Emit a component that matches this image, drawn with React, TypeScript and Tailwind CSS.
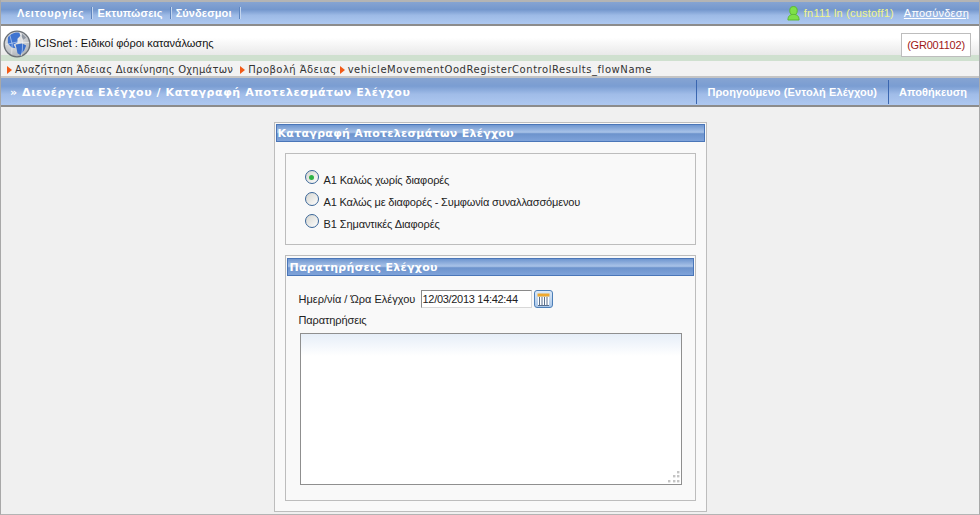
import React from "react";

const tahoma = "font-['Liberation_Sans','DejaVu_Sans',sans-serif]";

function Globe() {
  return (
    <svg width="28" height="28" viewBox="0 0 29 29" className="relative mt-[6px] shrink-0">
      <defs>
        <radialGradient id="g" cx="0.4" cy="0.3" r="0.8">
          <stop offset="0" stopColor="#f4f4f4" />
          <stop offset="1" stopColor="#a9adb3" />
        </radialGradient>
      </defs>
      <circle cx="14.5" cy="14.5" r="14" fill="#6a6f75" />
      <circle cx="14.5" cy="14.5" r="12.6" fill="url(#g)" />
      <path d="M5 8 C8 3 14 2 17 3 L18 6 L15 9 L15 13 L11 15 L13 19 L9 18 L5 14 Z" fill="#3f74d0" />
      <path d="M13 15 L20 14 L24 16 L22 21 L18 26 L15 24 L14 19 Z" fill="#3a6fcc" />
      <path d="M20 4 L24 8 L21 10 L19 7 Z" fill="#8f97a3" />
      <path d="M3 15 Q14 11 27 13 M7 5 Q11 14 9 25 M18 3 Q22 14 19 27" stroke="#fff" strokeWidth="0.7" fill="none" opacity="0.7" />
    </svg>
  );
}

function Arrow() {
  return (
    <svg width="5" height="8" viewBox="0 0 5 8" className="shrink-0">
      <path d="M0 0 L5 4 L0 8 Z" fill="#f25a16" />
    </svg>
  );
}

function Radio({ on }: { on?: boolean }) {
  return (
    <span className="flex h-[14px] w-[14px] shrink-0 items-center justify-center rounded-full border border-[#3a6698] bg-[linear-gradient(135deg,#d6d6d0,#fdfdfd)]">
      {on && <span className="h-[5px] w-[5px] rounded-full bg-[#2fb344]" />}
    </span>
  );
}

function TitleBar({ children, top }: { children: React.ReactNode; top: boolean }) {
  return (
    <div className={`mx-[1px] flex h-[18px] items-center border border-[#4a76b8] bg-[linear-gradient(#6f96cf,#a9c3e8_45%,#6d93cc_55%,#7fa3da)] pt-[2px] font-['DejaVu_Sans',sans-serif] text-[11px] font-bold tracking-[0.3px] text-white ${top ? "mt-[1px] pl-[1px]" : "mt-[2px] pl-[2px]"}`}>
      {children}
    </div>
  );
}

function CalendarIcon() {
  return (
    <span className="flex h-[18px] w-[19px] shrink-0 items-center justify-center rounded-[3px] border border-[#4d7fb8] bg-[linear-gradient(#dbe9f8,#a9c6e8)]">
      <svg width="13" height="13" viewBox="0 0 13 13">
        <rect x="0.5" y="0.5" width="12" height="3" fill="#f0a92e" />
        <rect x="1" y="4" width="11" height="8.5" fill="#fff" />
        <path d="M2.5 4 V12.5 M5 4 V12.5 M7.5 4 V12.5 M10 4 V12.5" stroke="#5a6f8c" strokeWidth="1" />
        <path d="M1 12.5 H12" stroke="#5a6f8c" />
      </svg>
    </span>
  );
}

function Sep() {
  return <span className="ml-[7px] mr-[5px] h-[12px] w-px bg-[#5f86c0] shadow-[1px_0_0_#c3d5ee]" />;
}

export default function App() {
  return (
    <div className={`flex h-[515px] w-[980px] flex-col overflow-hidden border-x border-b border-x-[#a8a8a8] border-b-[#b4b4b4] bg-[#f0f0f0] ${tahoma}`}>
      <div className="flex h-[26px] shrink-0 items-center border-t-2 border-b-2 border-t-[#b4b4b4] border-b-[#8c8c8c] bg-[linear-gradient(#86a4d2,#7497cd_35%,#9dbae6_60%,#adc8f0)] pl-[16px] pr-[10px] text-[11px]">
        <span className="font-bold tracking-[0.65px] text-white">Λειτουργίες</span>
        <Sep />
        <span className="font-bold tracking-[0.15px] text-white">Εκτυπώσεις</span>
        <Sep />
        <span className="font-bold tracking-[0.1px] text-white">Σύνδεσμοι</span>
        <Sep />
        <span className="flex-1" />
        <svg width="13" height="15" viewBox="0 0 14 16" className="mr-[4px]">
          <ellipse cx="7" cy="5" rx="4" ry="4.5" fill="#7ee04a" stroke="#5ab82c" />
          <path d="M1 15 C1 10 4 9 7 9 C10 9 13 10 13 15 Z" fill="#7ee04a" stroke="#5ab82c" />
        </svg>
        <span className="tracking-[0.2px] text-[#f1f58a]">fn111 ln (custoff1)</span>
        <span className="ml-[10px] tracking-[0.2px] text-white underline">Αποσύνδεση</span>
      </div>

      <div className="flex h-[29px] shrink-0 items-center bg-[linear-gradient(#ffffff,#ffffff_40%,#e9e9e9)] pl-[2px] pr-[8px]">
        <Globe />
        <span className="ml-[4px] mt-[6px] text-[11px] text-[#111]">ICISnet : Ειδικοί φόροι κατανάλωσης</span>
        <span className="flex-1" />
        <span className="relative mt-[9px] flex h-[24px] w-[70px] items-center justify-center border border-[#bdbdbd] bg-white text-[11px] tracking-[-0.2px] text-[#a01818]">
          (GR001102)
        </span>
      </div>
      <div className="h-[6px] shrink-0 bg-[#cfe0cf]" />
      <div className="flex h-[15px] shrink-0 items-center gap-[3px] bg-[#f2f2f2] pl-[6px] pt-[2px] font-['DejaVu_Sans',sans-serif] text-[10px] text-[#333]">
        <Arrow />
        <span className="tracking-[0.25px]">Αναζήτηση Άδειας Διακίνησης Οχημάτων</span>
        <span className="w-[1px]" />
        <Arrow />
        <span className="tracking-[0.45px]">Προβολή Άδειας</span>
        <Arrow />
        <span className="tracking-[0.55px]">vehicleMovementOodRegisterControlResults_flowName</span>
      </div>

      <div className="flex h-[31px] shrink-0 items-center border-t-2 border-b-2 border-t-[#c4c4c4] border-b-[#8c8c8c] bg-[linear-gradient(#86a4d2,#7a9dd2_30%,#a0bce8_60%,#aec8f0)] pl-[9px] text-white">
        <span className="pt-[4px] font-['DejaVu_Sans',sans-serif] text-[11px] font-bold tracking-[0.57px]">» Διενέργεια Ελέγχου / Καταγραφή Αποτελεσμάτων Ελέγχου</span>
        <span className="flex-1" />
        <span className="flex h-[24px] items-center border-l border-l-[#3a66b0] pl-[10px] pr-[11px] pt-[2px] text-[11px] font-bold tracking-[0.1px]">Προηγούμενο (Εντολή Ελέγχου)</span>
        <span className="flex h-[24px] items-center border-l border-l-[#3a66b0] pl-[10px] pr-[12px] pt-[2px] text-[11px] font-bold tracking-[0.05px]">Αποθήκευση</span>
      </div>

      <div className="flex flex-1 justify-center pt-[15px]">
        <div className="h-[390px] w-[433px] border border-[#bdbdbd] bg-[#f9f9f9]">
          <TitleBar top>Καταγραφή Αποτελεσμάτων Ελέγχου</TitleBar>
          <div className="mx-[10px] mt-[11px] flex h-[92px] flex-col gap-[6px] border border-[#bdbdbd] pl-[19px] pt-[15px] text-[11px] text-[#222]">
            <div className="flex h-[16px] items-center gap-[5px]"><Radio on /><span className="pt-[6px] tracking-[-0.1px]">Α1 Καλώς χωρίς διαφορές</span></div>
            <div className="flex h-[16px] items-center gap-[5px]"><Radio /><span className="pt-[6px] tracking-[-0.15px]">Α1 Καλώς με διαφορές - Συμφωνία συναλλασσόμενου</span></div>
            <div className="flex h-[16px] items-center gap-[5px]"><Radio /><span className="pt-[6px] tracking-[-0.1px]">Β1 Σημαντικές Διαφορές</span></div>
          </div>
          <div className="mx-[10px] mt-[10px] h-[246px] border border-[#bdbdbd]">
            <TitleBar top={false}>Παρατηρήσεις Ελέγχου</TitleBar>
            <div className="flex flex-col pl-[13px] pt-[13px] text-[11px] text-[#222]">
              <div className="flex h-[20px] items-center">
                <span className="w-[122px]">Ημερ/νία / Ώρα Ελέγχου</span>
                <span className="flex h-[18px] w-[111px] items-center border border-[#8a8a8a] border-r-[#d8d8d8] border-b-[#d8d8d8] bg-white pl-[1px] tracking-[-0.3px] text-[#222]">12/03/2013 14:42:44</span>
                <span className="ml-[2px]"><CalendarIcon /></span>
              </div>
              <span className="mt-[3px] h-[18px] tracking-[-0.1px]">Παρατηρήσεις</span>
              <div className="relative ml-[1px] mt-[3px] h-[152px] w-[382px] border border-[#8f8f8f] bg-[linear-gradient(#e6eef8,#ffffff_22px)]">
                <svg width="12" height="12" viewBox="0 0 12 12" className="absolute bottom-[1px] right-[1px]">
                  <g fill="#c4c4c4">
                    <rect x="9" y="0" width="2.4" height="2.4" /><rect x="5" y="4" width="2.4" height="2.4" /><rect x="9" y="4" width="2.4" height="2.4" />
                    <rect x="0" y="9" width="2.4" height="2.4" /><rect x="5" y="9" width="2.4" height="2.4" /><rect x="9" y="9" width="2.4" height="2.4" />
                  </g>
                </svg>
              </div>
            </div>
          </div>
        </div>
      </div>
    </div>
  );
}
